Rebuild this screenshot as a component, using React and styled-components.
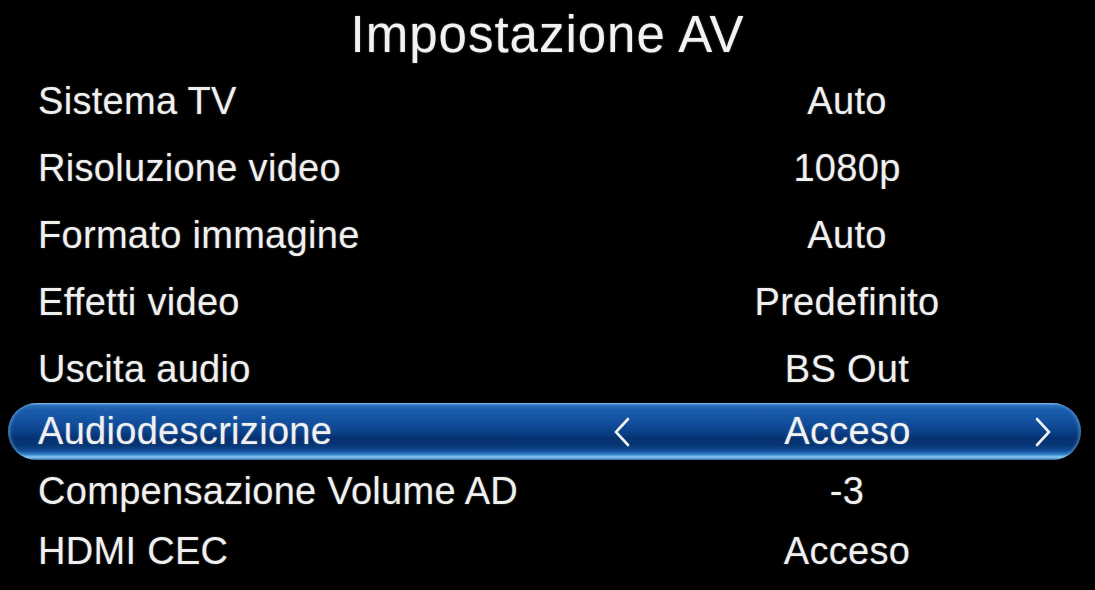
import React from 'react';
import styled, { createGlobalStyle } from 'styled-components';

const GlobalStyle = createGlobalStyle`
    html, body {
        margin: 0;
        padding: 0;
        background: #000;
    }
    body {
        width: 1095px;
        height: 590px;
        overflow: hidden;
        font-family: 'Liberation Sans', Arial, sans-serif;
        color: #f0f0f0;
    }
`;

const items = [
    { label: 'Sistema TV', value: 'Auto' },
    { label: 'Risoluzione video', value: '1080p' },
    { label: 'Formato immagine', value: 'Auto' },
    { label: 'Effetti video', value: 'Predefinito' },
    { label: 'Uscita audio', value: 'BS Out' },
    { label: 'Audiodescrizione', value: 'Acceso', active: true },
    { label: 'Compensazione Volume AD', value: '-3' },
    { label: 'HDMI CEC', value: 'Acceso' },
];

const Arrow = ({ dir }) => (
    <svg width="18" height="30" viewBox="0 0 18 30">
        <polyline
            points={dir === 'left' ? '15,2 3,15 15,28' : '3,2 15,15 3,28'}
            fill="none"
            stroke="#f2f2f2"
            strokeWidth="2.6"
            strokeLinecap="round"
            strokeLinejoin="miter"
        />
    </svg>
);

const AVSettings = () => {
    return (
        <Screen>
            <Title>Impostazione AV</Title>
            <Menu>
                {items.map((item, i) => {
                    if (item.active) {
                        return (
                            <ActiveRow key={item.label}>
                                <Label>{item.label}</Label>
                                <ArrowBox>
                                    <Arrow dir="left" />
                                </ArrowBox>
                                <ActiveValue>{item.value}</ActiveValue>
                                <ArrowBox>
                                    <Arrow dir="right" />
                                </ArrowBox>
                            </ActiveRow>
                        );
                    }
                    return (
                        <Row key={item.label} $compact={i > 5}>
                            <Label>{item.label}</Label>
                            <Value>{item.value}</Value>
                        </Row>
                    );
                })}
            </Menu>
        </Screen>
    );
};

const Screen = styled.div`
    width: 1095px;
    height: 590px;
    background: #000;
    display: flex;
    flex-direction: column;
`;

const Title = styled.h1`
    margin: 0;
    height: 68px;
    line-height: 70px;
    text-align: center;
    font-size: 51px;
    font-weight: 400;
    letter-spacing: 1px;
    color: #f2f2f2;
    text-shadow: 0 0 2px rgba(255, 255, 255, 0.35);
`;

const Menu = styled.div`
    display: flex;
    flex-direction: column;
`;

const Row = styled.div`
    display: grid;
    grid-template-columns: 1fr 400px;
    align-items: center;
    height: ${p => (p.$compact ? '60px' : '67px')};
    padding: 0 48px 0 38px;
    font-size: 38px;
    letter-spacing: 0.3px;
    text-shadow: 0 0 2px rgba(255, 255, 255, 0.3);
`;

const Label = styled.span`
    white-space: nowrap;
    color: #f0f0f0;
`;

const Value = styled.span`
    text-align: center;
    white-space: nowrap;
    color: #f0f0f0;
`;

const ActiveRow = styled.div`
    display: grid;
    grid-template-columns: 1fr 40px 381px 40px;
    align-items: center;
    height: 57px;
    margin: 0 14px 1px 8px;
    padding: 0 18px 0 30px;
    border-radius: 29px;
    font-size: 38px;
    letter-spacing: 0.3px;
    text-shadow: 0 0 2px rgba(255, 255, 255, 0.3);
    background: linear-gradient(
        to bottom,
        #6fb2e6 0%,
        #2c70bc 4%,
        #1a5dac 12%,
        #114e9c 35%,
        #0a3f86 52%,
        #063170 62%,
        #073675 74%,
        #0f4a92 83%,
        #2f7dc6 90%,
        #8fcdf2 95%,
        #3e86c8 98%,
        #123f78 100%
    );
    box-shadow: inset 2px 0 3px rgba(140, 200, 240, 0.45), inset -2px 0 3px rgba(140, 200, 240, 0.45);
`;

const ArrowBox = styled.span`
    display: flex;
    align-items: center;
    justify-content: center;
    height: 100%;
`;

const ActiveValue = styled.span`
    text-align: center;
    padding-left: 30px;
    white-space: nowrap;
    color: #f2f2f2;
`;

const App = () => (
    <>
        <GlobalStyle />
        <AVSettings />
    </>
);

export default App;
